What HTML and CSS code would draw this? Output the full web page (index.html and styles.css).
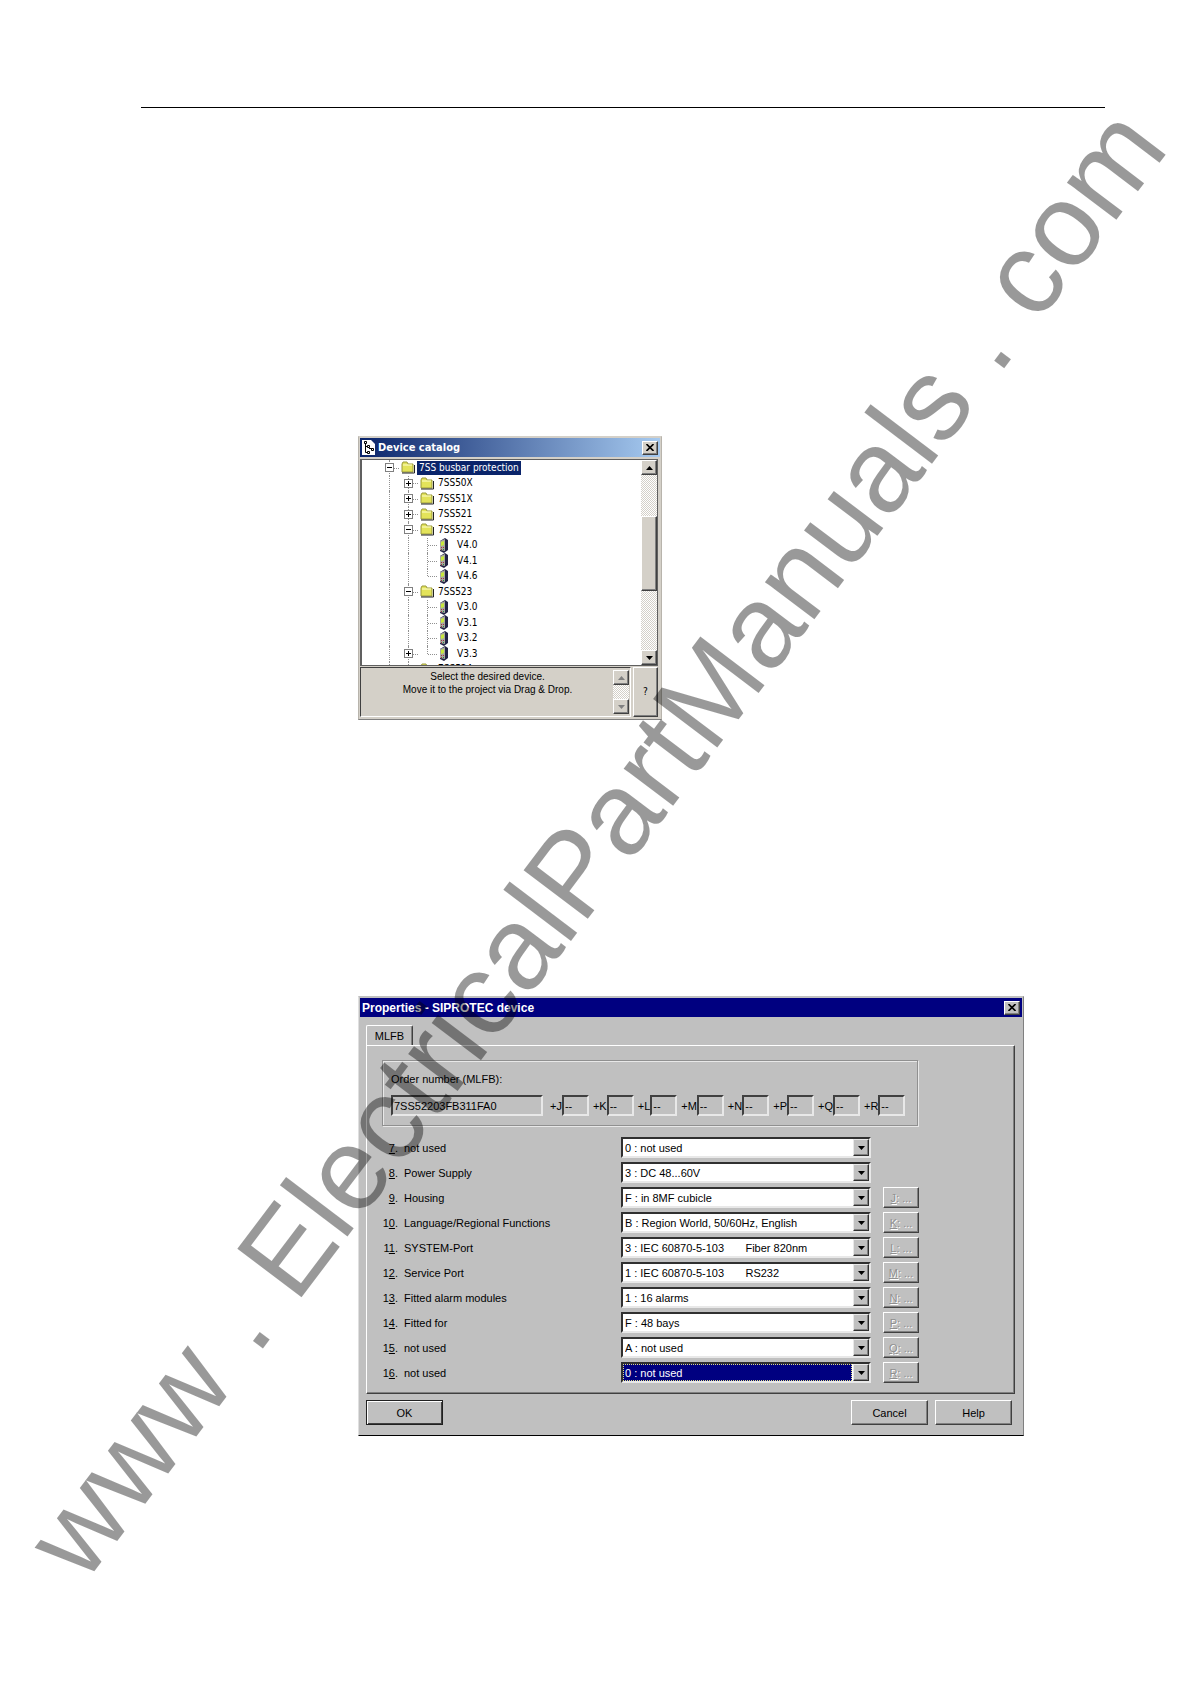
FILE: index.html
```html
<!DOCTYPE html>
<html lang="en">
<head>
    <meta charset="UTF-8">
    <meta name="viewport" content="width=device-width, initial-scale=1.0">
    <title>Device catalog</title>
    <link rel="stylesheet" href="styles.css">
</head>
<body>
    <svg class="sprite" aria-hidden="true">
        <symbol id="folder" viewBox="0 0 14 13">
            <path d="M1 3l1-2h4l1 2h5v8H1z" fill="#e3e35a" stroke="#9a9a3c"/>
            <path d="M2 4h9" stroke="#ffffd0"/>
            <path d="M1 12h12.5V4" fill="none" stroke="#222"/>
        </symbol>
        <symbol id="device" viewBox="0 0 10 15">
            <path d="M1 3l5-3 3 2v10l-4 3-4-2z" fill="#222244"/>
            <path d="M1 3l5-2v12l-5-1z" fill="#a8a8a0"/>
            <path d="M2 4l3-1v4l-3 1z" fill="#c8e83c"/>
            <path d="M2 9h1v1H2zM4 9h1v1H4zM2 11h1v1H2z" fill="#a03040"/>
            <path d="M4 11h1v1H4z" fill="#228844"/>
        </symbol>
        <symbol id="cross" viewBox="0 0 8 7">
            <path d="M0.5 0l7 7M7.5 0l-7 7" stroke="#000" stroke-width="1.6" fill="none"/>
        </symbol>
        <symbol id="up" viewBox="0 0 7 4"><path d="M0 4l3.5-4L7 4z" fill="currentColor"/></symbol>
        <symbol id="down" viewBox="0 0 7 4"><path d="M0 0l3.5 4L7 0z" fill="currentColor"/></symbol>
    </svg>

    <main class="page">
        <hr class="rule">

        <section class="window catalog">
            <header class="titlebar">
                <svg class="app-icon" viewBox="0 0 13 15">
                    <path d="M0 0h9l4 4v11H0z" fill="#fff"/>
                    <path d="M3.5 3v9.500h3M3.500 6.500h3M7 8.500h3" stroke="#000" fill="none"/>
                    <path d="M2.500 1.500h2v2h-2zM5.500 5.500h2v2h-2zM5.500 11.500h2v2h-2zM9.500 8.500h2v2h-2z" stroke="#000" fill="#fff"/>
                </svg>
                <h2>Device catalog</h2>
                <button class="close" aria-label="Close"><svg><use href="#cross"/></svg></button>
            </header>
            <div class="list">
                <ul class="tree">
                    <li><i class="line dash"><b class="box"></b></i><svg class="folder"><use href="#folder"/></svg><span class="picked">7SS busbar protection</span></li>
                    <li><i class="line"></i><i class="line dash"><b class="box plus"></b></i><svg class="folder"><use href="#folder"/></svg><span>7SS50X</span></li>
                    <li><i class="line"></i><i class="line dash"><b class="box plus"></b></i><svg class="folder"><use href="#folder"/></svg><span>7SS51X</span></li>
                    <li><i class="line"></i><i class="line dash"><b class="box plus"></b></i><svg class="folder"><use href="#folder"/></svg><span>7SS521</span></li>
                    <li><i class="line"></i><i class="line dash"><b class="box"></b></i><svg class="folder"><use href="#folder"/></svg><span>7SS522</span></li>
                    <li><i class="line"></i><i class="line"></i><i class="line dash"></i><svg class="device"><use href="#device"/></svg><span>V4.0</span></li>
                    <li><i class="line"></i><i class="line"></i><i class="line dash"></i><svg class="device"><use href="#device"/></svg><span>V4.1</span></li>
                    <li><i class="line"></i><i class="line"></i><i class="line dash last"></i><svg class="device"><use href="#device"/></svg><span>V4.6</span></li>
                    <li><i class="line"></i><i class="line dash"><b class="box"></b></i><svg class="folder"><use href="#folder"/></svg><span>7SS523</span></li>
                    <li><i class="line"></i><i class="line"></i><i class="line dash"></i><svg class="device"><use href="#device"/></svg><span>V3.0</span></li>
                    <li><i class="line"></i><i class="line"></i><i class="line dash"></i><svg class="device"><use href="#device"/></svg><span>V3.1</span></li>
                    <li><i class="line"></i><i class="line"></i><i class="line dash"></i><svg class="device"><use href="#device"/></svg><span>V3.2</span></li>
                    <li><i class="line"></i><i class="line dash"><b class="box plus"></b></i><i class="line dash last"></i><svg class="device"><use href="#device"/></svg><span>V3.3</span></li>
                    <li><i class="line"></i><i class="line dash"><b class="box"></b></i><svg class="folder"><use href="#folder"/></svg><span>7SS524</span></li>
                </ul>
                <div class="scroll">
                    <button aria-label="Scroll up"><svg><use href="#up"/></svg></button>
                    <div class="thumb"></div>
                    <button aria-label="Scroll down"><svg><use href="#down"/></svg></button>
                </div>
            </div>
            <div class="bottom">
                <div class="hint">
                    <p>Select the desired device.<br>Move it to the project via Drag &amp; Drop.</p>
                    <div class="scroll off">
                        <button aria-label="Hint up" disabled><svg><use href="#up"/></svg></button>
                        <button aria-label="Hint down" disabled><svg><use href="#down"/></svg></button>
                    </div>
                </div>
                <button class="ask">?</button>
            </div>
        </section>

        <section class="window properties">
            <header class="titlebar">
                <h2>Properties - SIPROTEC device</h2>
                <button class="close" aria-label="Close"><svg><use href="#cross"/></svg></button>
            </header>
            <form class="body">
                <button type="button" class="tab">MLFB</button>
                <div class="panel">
                    <div class="group">
                        <label for="order">Order number (MLFB):</label>
                        <div class="order">
                            <input class="number" id="order" value="7SS52203FB311FA0" readonly>
                            <label for="pj">+J</label><input id="pj" value="--" readonly>
                            <label for="pk">+K</label><input id="pk" value="--" readonly>
                            <label for="pl">+L</label><input id="pl" value="--" readonly>
                            <label for="pm">+M</label><input id="pm" value="--" readonly>
                            <label for="pn">+N</label><input id="pn" value="--" readonly>
                            <label for="pp">+P</label><input id="pp" value="--" readonly>
                            <label for="pq">+Q</label><input id="pq" value="--" readonly>
                            <label for="pr">+R</label><input id="pr" value="--" readonly>
                        </div>
                    </div>
                    <div class="row">
                        <label for="s7"><span><u>7</u>.</span>not used</label>
                        <div class="combo"><select id="s7"><option>0 : not used</option></select><i><svg><use href="#down"/></svg></i></div>
                    </div>
                    <div class="row">
                        <label for="s8"><span><u>8</u>.</span>Power Supply</label>
                        <div class="combo"><select id="s8"><option>3 : DC 48...60V</option></select><i><svg><use href="#down"/></svg></i></div>
                    </div>
                    <div class="row">
                        <label for="s9"><span><u>9</u>.</span>Housing</label>
                        <div class="combo"><select id="s9"><option>F : in 8MF cubicle</option></select><i><svg><use href="#down"/></svg></i></div>
                        <button type="button" class="more" disabled><u>J</u>: ...</button>
                    </div>
                    <div class="row">
                        <label for="s10"><span>1<u>0</u>.</span>Language/Regional Functions</label>
                        <div class="combo"><select id="s10"><option>B : Region World, 50/60Hz, English</option></select><i><svg><use href="#down"/></svg></i></div>
                        <button type="button" class="more" disabled><u>K</u>: ...</button>
                    </div>
                    <div class="row">
                        <label for="s11"><span>1<u>1</u>.</span>SYSTEM-Port</label>
                        <div class="combo"><select id="s11"><option>3 : IEC 60870-5-103&nbsp;&nbsp;&nbsp;&nbsp;&nbsp;&nbsp;&nbsp;Fiber 820nm</option></select><i><svg><use href="#down"/></svg></i></div>
                        <button type="button" class="more" disabled><u>L</u>: ...</button>
                    </div>
                    <div class="row">
                        <label for="s12"><span>1<u>2</u>.</span>Service Port</label>
                        <div class="combo"><select id="s12"><option>1 : IEC 60870-5-103&nbsp;&nbsp;&nbsp;&nbsp;&nbsp;&nbsp;&nbsp;RS232</option></select><i><svg><use href="#down"/></svg></i></div>
                        <button type="button" class="more" disabled><u>M</u>: ...</button>
                    </div>
                    <div class="row">
                        <label for="s13"><span>1<u>3</u>.</span>Fitted alarm modules</label>
                        <div class="combo"><select id="s13"><option>1 : 16 alarms</option></select><i><svg><use href="#down"/></svg></i></div>
                        <button type="button" class="more" disabled><u>N</u>: ...</button>
                    </div>
                    <div class="row">
                        <label for="s14"><span>1<u>4</u>.</span>Fitted for</label>
                        <div class="combo"><select id="s14"><option>F : 48 bays</option></select><i><svg><use href="#down"/></svg></i></div>
                        <button type="button" class="more" disabled><u>P</u>: ...</button>
                    </div>
                    <div class="row">
                        <label for="s15"><span>1<u>5</u>.</span>not used</label>
                        <div class="combo"><select id="s15"><option>A : not used</option></select><i><svg><use href="#down"/></svg></i></div>
                        <button type="button" class="more" disabled><u>Q</u>: ...</button>
                    </div>
                    <div class="row">
                        <label for="s16"><span>1<u>6</u>.</span>not used</label>
                        <div class="combo active"><select id="s16"><option>0 : not used</option></select><i><svg><use href="#down"/></svg></i></div>
                        <button type="button" class="more" disabled><u>R</u>: ...</button>
                    </div>
                </div>
                <footer>
                    <button type="button" class="ok">OK</button>
                    <button type="button">Cancel</button>
                    <button type="button">Help</button>
                </footer>
            </form>
        </section>

        <div class="watermark">www . ElectricalPartManuals . com</div>
    </main>
</body>
</html>
```

FILE: styles.css
```css
*{
    margin: 0;
    padding: 0;
    box-sizing: border-box;
}
body{
    background-color: #fff;
    color: #000;
    font-family: "Liberation Sans", Arial, sans-serif;
    font-size: 11px;
    line-height: 14px;
}
button, input, select{
    font: inherit;
    color: inherit;
}
ul{
    list-style: none;
}
.sprite{
    position: absolute;
    width: 0;
    height: 0;
}
.page{
    position: relative;
    min-height: 100vh;
    padding: 107px 85px 0 141px;
    overflow: hidden;
}
.rule{
    border: none;
    border-top: 1px solid #000;
}

/* windows */
.window{
    margin-left: 217px;
    border: 1px solid;
    padding: 1px;
}
.titlebar{
    display: flex;
    align-items: center;
    height: 19px;
    color: #fff;
}
.titlebar h2{
    flex: 1;
    font-size: 12px;
}
.window button{
    display: flex;
    justify-content: center;
    align-items: center;
    background-color: inherit;
    border: 1px solid;
    border-color: #fff #404040 #404040 #fff;
    box-shadow: inset -1px -1px #808080;
}
.titlebar .close{
    width: 16px;
    height: 14px;
    color: #000;
}
.close svg{
    width: 8px;
    height: 7px;
}

/* device catalog */
.catalog{
    width: 304px;
    margin-top: 328px;
    background-color: #d4d0c8;
    border-color: #d4d0c8 #b8b4ac #808080 #b8b4ac;
    font-family: "DejaVu Sans Condensed", Tahoma, sans-serif;
    font-size: 10px;
}
.catalog .titlebar{
    gap: 3px;
    padding: 0 2px;
    background: linear-gradient(90deg, #0a246a, #a6caf0);
}
.catalog .titlebar h2{
    font-size: 11px;
}
.catalog .close{
    background-color: #d4d0c8;
}
.app-icon{
    width: 13px;
    height: 15px;
}
.list{
    display: flex;
    height: 207px;
    margin: 2px 2px 0 0;
    border: 1px solid #606060;
    border-left-width: 2px;
    background-color: #fff;
    overflow: hidden;
}
.tree{
    flex: 1;
    display: grid;
    grid-auto-rows: 1fr;
    height: 217px;
    padding-left: 18px;
}
.tree li{
    display: flex;
    align-items: center;
}
.line{
    position: relative;
    align-self: stretch;
    width: 19px;
    font-style: normal;
}
.line::before{
    content: "";
    position: absolute;
    left: 9px;
    top: 0;
    bottom: 0;
    border-left: 1px dotted #909090;
}
.line.last::before{
    bottom: 50%;
}
.line.dash::after{
    content: "";
    position: absolute;
    left: 10px;
    right: 0;
    top: 50%;
    border-top: 1px dotted #909090;
}
.box{
    position: absolute;
    z-index: 1;
    left: 5px;
    top: 3px;
    width: 9px;
    height: 9px;
    border: 1px solid #808080;
    background: linear-gradient(#000, #000) center / 5px 1px no-repeat #fff;
}
.box.plus{
    background: linear-gradient(#000, #000) center / 5px 1px no-repeat, linear-gradient(#000, #000) center / 1px 5px no-repeat #fff;
}
.tree .folder{
    width: 14px;
    height: 13px;
    margin: 0 2px;
}
.tree .device{
    width: 10px;
    height: 15px;
    margin: 0 6px 0 2px;
}
.tree span{
    padding: 0 2px;
}
.tree .picked{
    background-color: #0a246a;
    color: #fff;
}
.scroll{
    display: flex;
    flex-direction: column;
    justify-content: space-between;
    width: 16px;
    background: repeating-conic-gradient(#d4d0c8 0 25%, #fff 0 50%) 0 0 / 2px 2px;
}
.window .scroll button{
    height: 15px;
    background-color: #d4d0c8;
}
.scroll svg{
    width: 7px;
    height: 4px;
}
.thumb{
    height: 75px;
    margin-bottom: 19px;
    background-color: #d4d0c8;
    border: 1px solid;
    border-color: #fff #404040 #404040 #fff;
    box-shadow: inset -1px -1px #808080;
}
.bottom{
    display: flex;
    gap: 2px;
    height: 50px;
    margin: 1px 2px 1px 0;
    background-color: #d4d0c8;
}
.hint{
    flex: 1;
    display: flex;
    padding: 2px 1px;
    border: 1px solid;
    border-color: #404040 #fff #fff #404040;
    font-family: "Liberation Sans", Arial, sans-serif;
    line-height: 13px;
    text-align: center;
}
.hint p{
    flex: 1;
}
.off{
    color: #808080;
}
.window .ask{
    width: 25px;
}

/* device properties */
.properties{
    margin-top: 276px;
    margin-right: 81px;
    background-color: #c0c0c0;
    border-color: #c0c0c0 #808080 #000 #dfdfdf;
}
.properties .titlebar{
    padding: 0 2px;
    background-color: #000080;
}
.properties .close{
    background-color: #c0c0c0;
}
.body{
    padding: 8px 7px 9px 6px;
    background-color: #c0c0c0;
}
.body .tab{
    width: 47px;
    height: 20px;
    border-bottom: none;
    box-shadow: inset -1px 0 #808080;
    border-radius: 2px 2px 0 0;
}
.panel{
    padding: 14px 15px 8px;
    border: 1px solid;
    border-color: #fff #404040 #404040 #fff;
    box-shadow: inset -1px -1px #808080;
}
.group{
    max-width: 536px;
    margin-bottom: 9px;
    padding: 11px 8px 9px;
    border: 1px solid #909090;
    box-shadow: inset 1px 1px #e8e8e8, 1px 1px #e8e8e8;
}
.order{
    display: flex;
    align-items: center;
    margin-top: 9px;
}
.order label{
    margin-left: 4px;
}
.order input{
    width: 27px;
    height: 21px;
    padding-left: 1px;
    background-color: #c0c0c0;
    border: 2px solid;
    border-color: #404040 #e8e8e8 #e8e8e8 #404040;
}
.order .number{
    width: 152px;
    margin-right: 3px;
}
.row{
    display: flex;
    align-items: center;
    height: 25px;
}
.row label{
    width: 239px;
}
.row label span{
    display: inline-block;
    width: 16px;
    margin-right: 6px;
    text-align: right;
}
.combo{
    position: relative;
    width: 250px;
    height: 21px;
    border: 2px solid;
    border-color: #303030 #e8e8e8 #e8e8e8 #303030;
    background-color: #fff;
}
.combo select{
    display: block;
    width: 100%;
    height: 100%;
    padding-left: 2px;
    border: none;
    background: none;
    appearance: none;
}
.combo i{
    position: absolute;
    right: 0;
    top: 0;
    bottom: 0;
    display: flex;
    justify-content: center;
    align-items: center;
    width: 16px;
    background-color: #c0c0c0;
    border: 1px solid;
    border-color: #e8e8e8 #303030 #303030 #e8e8e8;
    box-shadow: inset -1px -1px #808080;
    pointer-events: none;
}
.combo svg{
    width: 7px;
    height: 4px;
}
.active select{
    width: 229px;
    background-color: #000080;
    border: 1px dotted #e0e080;
    padding-left: 1px;
    color: #fff;
}
.row .more{
    width: 36px;
    height: 21px;
    margin-left: 12px;
    color: #909090;
    text-shadow: 1px 1px #fff;
    white-space: pre;
}
footer{
    display: flex;
    gap: 7px;
    padding: 6px 3px 0 0;
}
.body footer button{
    width: 77px;
    height: 25px;
}
.body footer .ok{
    margin-right: auto;
    border-color: #202020;
    box-shadow: inset 1px 1px #fff, inset -1px -1px #404040;
}

/* diagonal stamp across the sheet, turned about the start of its baseline */
.watermark{
    position: absolute;
    left: 84px;
    top: 1486px;
    font-size: 117px;
    line-height: 117px;
    font-kerning: none;
    white-space: nowrap;
    color: rgba(0, 0, 0, 0.4);
    transform: rotate(-52.9deg);
    transform-origin: 0 99px;
    pointer-events: none;
}
```
